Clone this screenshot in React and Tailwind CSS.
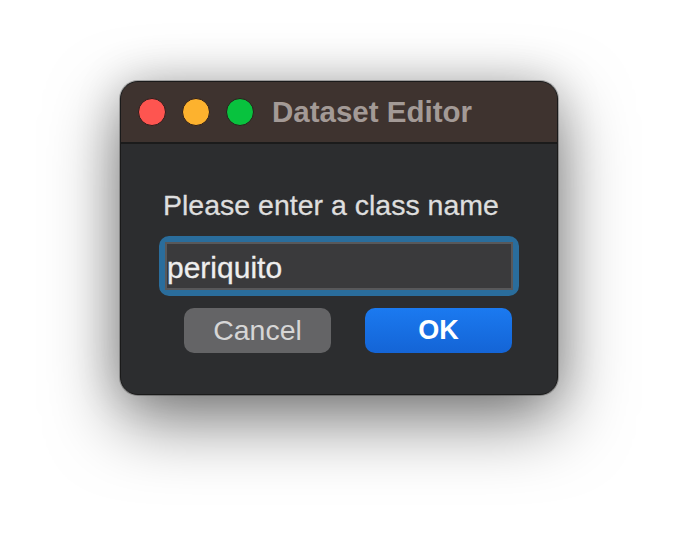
export default function App() {
  return (
    <div
      className="w-[679px] h-[555px] bg-white pl-[120px] pt-[81px]"
      style={{ fontFamily: '"Liberation Sans", Arial, sans-serif' }}
    >
      <div className="w-[438px] h-[314px] rounded-[18px] border border-[#1a1a1a] ring-1 ring-black/25 bg-[#2c2d2f] overflow-hidden shadow-[0_26px_70px_rgba(0,0,0,0.5),0_0_45px_rgba(0,0,0,0.18)] flex flex-col">
        {/* title bar */}
        <div className="h-[62px] shrink-0 bg-[#3e332f] border-b-2 border-[#1b1b1b] flex items-center pl-[17px]">
          <div className="flex items-center gap-4">
            <span className="w-[28px] h-[28px] rounded-full bg-[#fe5550] border border-[#2b1d1c]" />
            <span className="w-[28px] h-[28px] rounded-full bg-[#fdb22e] border border-[#2b1d1c]" />
            <span className="w-[28px] h-[28px] rounded-full bg-[#08c23e] border border-[#2b1d1c]" />
          </div>
          <span className="ml-[18px] text-[29.5px] leading-none font-bold text-[#a39a96]">
            Dataset Editor
          </span>
        </div>

        {/* body */}
        <div className="flex-1 flex flex-col pt-[45px] px-[38px]">
          <div className="pl-[4px] text-[28.5px] leading-[32px] text-[#dedede] [-webkit-text-stroke:0.3px_#dedede]">
            Please enter a class name
          </div>

          <div className="mt-[15px] h-[60px] rounded-[10px] border-[6px] border-[#2a6d9c]">
            <div className="h-full border-2 border-[#58585a] bg-[#3a3a3c] flex items-center pt-[2px] text-[30px] text-[#eeeeee] [-webkit-text-stroke:0.3px_#eeeeee]">
              periquito
            </div>
          </div>

          <div className="mt-[12px] ml-[25px] flex gap-[34px]">
            <button className="w-[147px] h-[45px] rounded-[10px] bg-[#646466] text-[28.5px] text-[#d6d6d6] flex items-center justify-center">
              Cancel
            </button>
            <button className="w-[147px] h-[45px] rounded-[10px] bg-gradient-to-b from-[#1b7af0] to-[#1464d6] text-[27px] font-bold text-white flex items-center justify-center">
              OK
            </button>
          </div>
        </div>
      </div>
    </div>
  )
}
